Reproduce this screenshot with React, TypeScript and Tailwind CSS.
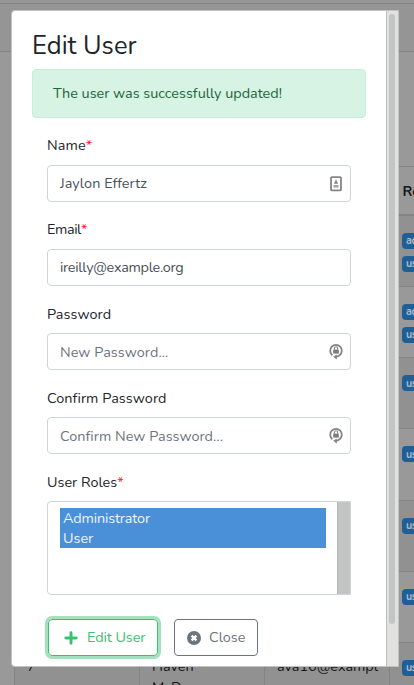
import type { ReactNode } from "react";

function NameCardIcon() {
  return (
    <svg className="h-4 w-3" viewBox="0 0 12 16" fill="none">
      <rect x="1" y="1.2" width="10" height="13.2" rx="0.8" stroke="#858585" strokeWidth="1.8" />
      <path d="M6 3.2L7 5.6L8.2 7.8H3.8L5 5.6z" fill="#858585" />
      <path d="M3.5 9h5v2.6h-5z" fill="#a3a3a3" />
    </svg>
  );
}

function LockIcon() {
  return (
    <svg className="-mr-px h-[17px] w-3.5" viewBox="0 0 14 17" fill="none">
      <path d="M3.4 12.2A5.8 5.8 0 1 1 10.6 12.2Q9.4 13.6 7 13.8" stroke="#858585" strokeWidth="1.8" />
      <path d="M7.8 11.4v5.2L4.2 13.8z" fill="#858585" />
      <rect x="4.2" y="6.6" width="5.6" height="4" fill="#7c7c7c" />
      <path d="M5.4 6.7V5.4a1.6 1.6 0 0 1 3.2 0v1.3" stroke="#858585" strokeWidth="1.1" />
    </svg>
  );
}

function Field({ label, labelClass, required, children }: { label: string; labelClass: string; required?: boolean; children: ReactNode }) {
  return (
    <div className="flex h-21 flex-col">
      <div className={`h-[30px] leading-[21px] text-[#212529] ${required ? "" : "pt-px"}`}>
        <span className={labelClass}>{label}</span>
        {required && <span className="text-[#f22]">*</span>}
      </div>
      {children}
    </div>
  );
}

function Input({ text, textClass, icon }: { text: string; textClass: string; icon?: ReactNode }) {
  return (
    <div className="flex h-[37px] items-center justify-between rounded border border-[#ced4da] bg-white pr-2 pl-3">
      <span className={textClass}>{text}</span>
      {icon}
    </div>
  );
}

function Badge({ text }: { text: string }) {
  return (
    <span className="flex h-4 w-16 shrink-0 items-center rounded bg-[#205f96] pt-px pl-1 text-[10.8px] font-bold tracking-[-0.4px] text-[#a9b8c5]">
      {text}
    </span>
  );
}

const rows = [
  { roles: ["admin", "user"], dark: true },
  { roles: ["admin", "user"], dark: false },
  { roles: ["user"], dark: true },
  { roles: ["user"], dark: false },
  { roles: ["user"], dark: true },
  { roles: ["user"], dark: false },
  { roles: ["user"], dark: true, id: "7", name: "Haven McD", email: "ava16@exampl" },
];

function UsersPage() {
  return (
    <div className="h-[685px] w-[414px] overflow-hidden bg-[#999] text-[#15171a]">
      <div className="h-1 border-b border-[#808285] bg-[#959595]" />
      <div className="h-12 border-b border-[#808285] bg-[#959595]" />
      <div className="ml-3.5 mt-[114px] w-[500px] border-l border-[#828487]">
        <div className="grid h-[50px] grid-cols-[125px_125px_125px_125px] border-t border-b-2 border-[#828487]">
          <div className="border-r border-[#828487]" />
          <div className="border-r border-[#828487]" />
          <div className="border-r border-[#828487]" />
          <div className="pt-[13px] pl-[12.5px] text-[14.4px] font-bold leading-[22px]">Roles</div>
        </div>
        {rows.map((row, i) => (
          <div
            key={i}
            className={`grid grid-cols-[125px_125px_125px_125px] overflow-hidden border-b border-[#828487] ${i === 0 ? "h-[71px]" : "h-[71.2px]"} ${row.dark ? "bg-[#919191]" : "bg-[#999]"}`}
          >
            <div className="border-r border-[#828487] pt-[13px] pl-3 leading-[21px]">{row.id}</div>
            <div className="border-r border-[#828487] pt-[13px] pl-3 leading-[21px]">{row.name && <>Haven<br />McD</>}</div>
            <div className="border-r border-[#828487] pt-[13px] pl-3 leading-[21px]">{row.email}</div>
            <div className="flex flex-col gap-[7px] pt-[17px] pl-3">
              {row.roles.map((r) => (
                <Badge key={r} text={r} />
              ))}
            </div>
          </div>
        ))}
      </div>
    </div>
  );
}

export default function App() {
  return (
    <div className="relative h-[685px] w-[414px] overflow-hidden font-['Nunito','Lato',sans-serif] text-[14.4px]">
      <UsersPage />
      <div className="absolute top-2.5 left-[11px] flex h-[657px] w-[388px] overflow-hidden rounded-l border border-[#c2c2c2] bg-white">
        <div className="w-[374px] pt-[17px] pl-5">
          <h1 className="h-[41px] pt-px text-[25.5px] leading-[34px] text-[#212529]">Edit User</h1>
          <div className="h-[49px] w-[334px] rounded border border-[#c7eed8] bg-[#d7f3e3] pt-[13px] pl-5 leading-[21px] text-[#1d643b]">
            The user was successfully updated!
          </div>
          <div className="mt-[17px] ml-[15px] w-[304px]">
            <Field label="Name" labelClass="tracking-[0.1px]" required>
              <Input text="Jaylon Effertz" textClass="tracking-[0.07px] text-[#495057]" icon={<NameCardIcon />} />
            </Field>
            <Field label="Email" labelClass="tracking-[-0.4px]" required>
              <Input text="ireilly@example.org" textClass="tracking-[-0.27px] text-[#495057]" />
            </Field>
            <Field label="Password" labelClass="tracking-[0.08px]">
              <Input text="New Password..." textClass="pt-0.5 tracking-[0.07px] text-[#6c757d]" icon={<LockIcon />} />
            </Field>
            <Field label="Confirm Password" labelClass="tracking-[0.08px]">
              <Input text="Confirm New Password..." textClass="pt-0.5 tracking-[0.04px] text-[#6c757d]" icon={<LockIcon />} />
            </Field>
            <div className="h-[30px] pt-px leading-[21px] text-[#212529]">
              User Roles<span className="text-[#f22]">*</span>
            </div>
            <div className="flex h-[94px] justify-between rounded-l border border-[#ced4da] bg-white">
              <div className="mt-1.5 ml-3 h-10 w-[266px] bg-[#4a90d9] pl-[3px] leading-5 text-[#eef4fb]">
                <div className="tracking-[-0.13px]">Administrator</div>
                <div>User</div>
              </div>
              <div className="w-[13px] border-l border-[#b4b6b5] bg-[#c3c5c4]" />
            </div>
            <div className="mt-6 ml-px flex h-[37px] gap-4">
              <button className="flex w-[110px] items-center rounded border border-[#38c172] pl-[14.5px] text-[#38c172] ring-3 ring-[#a3e2bd]">
                <svg className="mr-[9.5px] h-3.5 w-3.5 shrink-0" viewBox="0 0 14 14">
                  <path d="M7 1.8v10.4M1.8 7h10.4" stroke="#38c172" strokeWidth="2.9" strokeLinecap="round" />
                </svg>
                <span className="whitespace-nowrap tracking-[-0.08px]">Edit User</span>
              </button>
              <button className="flex w-[84px] items-center rounded border border-[#6c757d] pl-3 text-[#6c757d]">
                <svg className="mr-2 h-3.5 w-3.5 shrink-0" viewBox="0 0 14 14">
                  <circle cx="7" cy="7" r="7" fill="#6c757d" />
                  <path d="M4.6 4.6l4.8 4.8M9.4 4.6L4.6 9.4" stroke="white" strokeWidth="2.4" />
                </svg>
                <span>Close</span>
              </button>
            </div>
          </div>
        </div>
        <div className="w-3 border-l border-[#bfbfbf] bg-[#e1e1df] pt-[3px] pl-0.5">
          <div className="h-[610px] w-1.5 rounded-full bg-[#c3c5c4]" />
        </div>
      </div>
    </div>
  );
}
